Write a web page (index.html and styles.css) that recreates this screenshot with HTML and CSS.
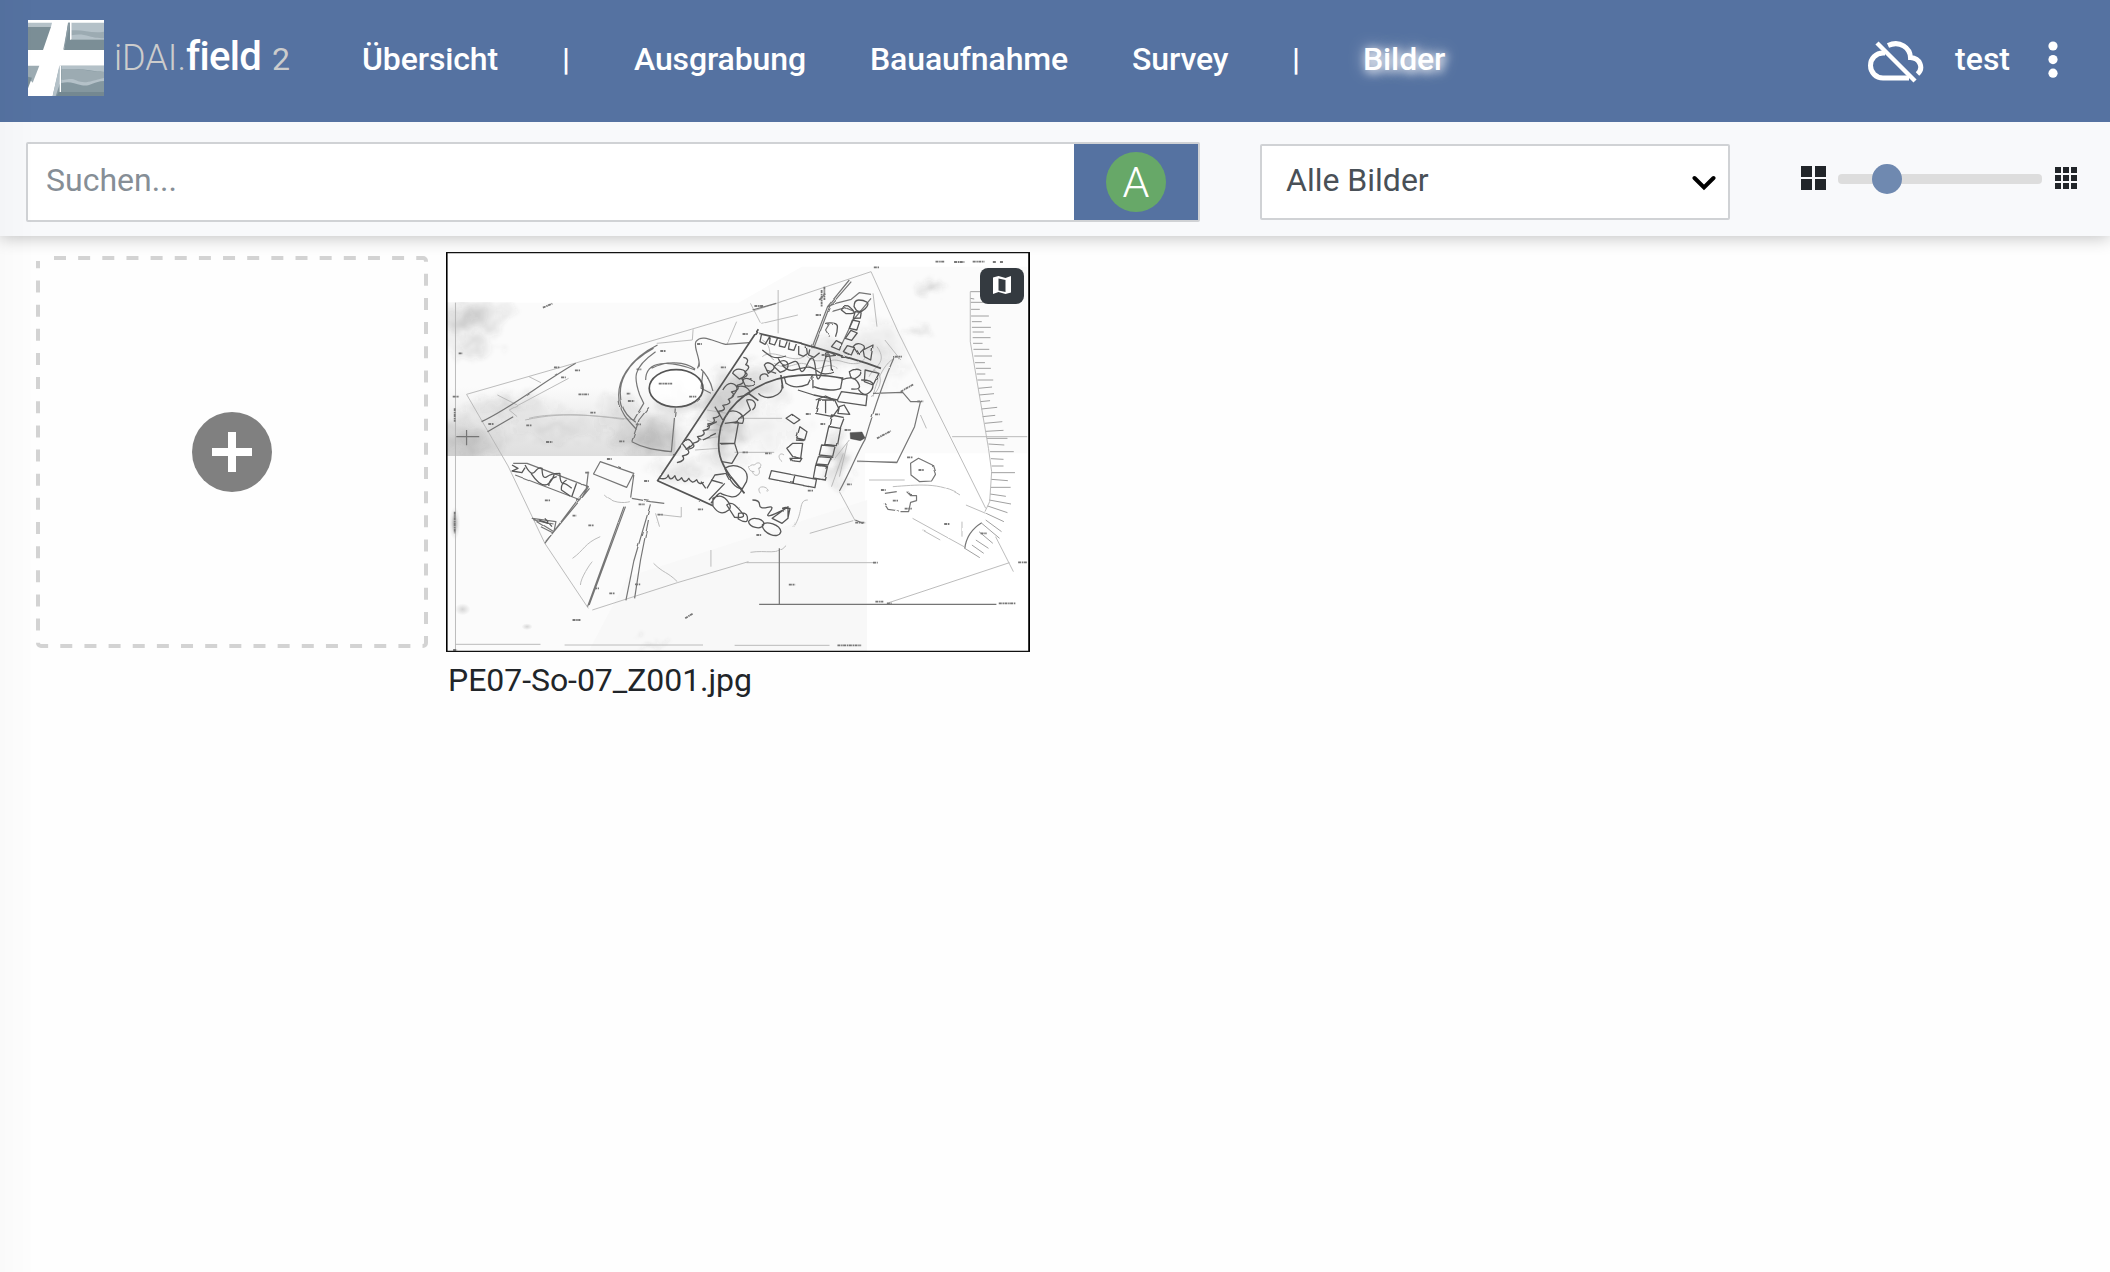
FILE: index.html
```html
<!DOCTYPE html>
<html lang="de">
<head>
<meta charset="utf-8">
<title>iDAI.field 2</title>
<link rel="stylesheet" href="styles.css">
</head>
<body>
<header class="navbar">
  <svg class="logo" viewBox="84 60 228 228" aria-hidden="true">
    <path fill="#fff" d="M84 60h228v228H84z"/>
    <path fill="#b4c1c8" d="M84 68h72l-3 12H84z"/>
    <path fill="#7b8e96" d="M84 80h69l-24 70H84z"/>
    <path fill="#7b8e96" d="M204 68l-12 82h120v-32h-98V68z"/>
    <path fill="#8b9ca4" d="M205 68h7l-20 82-2-2z"/>
    <path fill="#b4c1c8" d="M215 68h97v50h-97z"/>
    <path fill="#9cabb2" d="M215 91c34-3 60 10 97 4v20c-20 0-30-2-44-6-18-5-32-7-53-3z"/>
    <path stroke="#fff" stroke-width="4" d="M212 66v53"/>
    <path fill="#9cabb2" d="M84 197h34l-20 51-14-16z"/>
    <path fill="#7b8e96" d="M84 230l12 3-12 32z"/>
    <path fill="#84979f" d="M179 197h133v91H158z"/>
    <path fill="#b4c1c8" d="M184 197h128v19c-34 0-47-11-128-7z"/>
    <path fill="#9cabb2" d="M184 208c70-4 82 9 128 7v27c-35 0-33 11-63 7-29-4-39-12-65-9z"/>
    <path fill="#b4c1c8" d="M184 239c17 2 29-6 44 2 30 13 44 1 84-7v9c-35 2-39 17-67 13-24-7-38-13-61-7z"/>
    <path fill="#748891" d="M176 276h136v12H170z"/>
    <path fill="#b4c1c8" d="M178 197l-20 91h9l13-38z"/>
    <path stroke="#fff" stroke-width="4" d="M181 197v79"/>
  </svg>
  <div class="brand"><span class="brand-light">iDAI.</span><span class="brand-name">field</span><span class="brand-version">2</span></div>
  <nav class="nav">
    <a class="n-over">Übersicht</a><span class="sep">|</span><a class="n-dig">Ausgrabung</a><a class="n-build">Bauaufnahme</a><a class="n-survey">Survey</a><span class="sep">|</span><a class="active">Bilder</a>
  </nav>
  <div class="status">
    <svg class="cloud" viewBox="0 0 56 44" fill="none" stroke="#fff" stroke-width="5">
      <path d="M17 13h-2C8 13 2.500 18.500 2.500 25.500S8 38 15 38h26M20 5.500C32 0 42 8 42.500 17.500C52 18 56 28 49.500 34"/>
      <path stroke-width="4.500" d="M9 3l38 38"/>
    </svg>
    <span class="project">test</span>
    <svg class="dots" viewBox="0 0 10 38" fill="#fff"><circle cx="5" cy="5" r="4.600"/><circle cx="5" cy="18.600" r="4.600"/><circle cx="5" cy="32.200" r="4.600"/></svg>
  </div>
</header>
<section class="toolbar">
  <div class="search"><span class="placeholder">Suchen...</span><button class="type-button"><span class="type-icon">A</span></button></div>
  <div class="select"><span>Alle Bilder</span>
    <svg class="chevron" viewBox="0 0 24 16"><path d="M2.500 3l9.500 9.500L21.500 3" fill="none" stroke="#000" stroke-width="4" stroke-linecap="round"/></svg>
  </div>
  <div class="zoom">
    <svg class="grid-large" viewBox="0 0 25 24" fill="#212529"><path d="M0 0h11v11H0zM14 0h11v11H14zM0 13h11v11H0zM14 13h11v11H14z"/></svg>
    <div class="track"><i class="thumb"></i></div>
    <svg class="grid-small" viewBox="0 0 22 22" fill="#212529"><path d="M0 0h6v6H0zM8 0h6v6H8zM16 0h6v6h-6zM0 8h6v6H0zM8 8h6v6H8zM16 8h6v6h-6zM0 16h6v6H0zM8 16h6v6H8zM16 16h6v6h-6z"/></svg>
  </div>
</section>
<main class="gallery">
  <svg class="dropzone" viewBox="0 0 392 392">
    <path d="M18 2H387a3 3 0 0 1 3 3V387a3 3 0 0 1-3 3H5a3 3 0 0 1-3-3V5" fill="none" stroke="#d3d3d3" stroke-width="4" stroke-dasharray="12 12.150"/>
    <circle cx="196" cy="196" r="40" fill="#808080"/><path d="M176 196h40M196 176v40" stroke="#fff" stroke-width="8"/>
  </svg>
  <figure class="item">
    <div class="thumb-wrap">
      <svg class="plan" viewBox="40 36 1477 1200" preserveAspectRatio="none">
        <defs>
          <radialGradient id="smudge"><stop offset="0" stop-color="#444" stop-opacity=".26"/><stop offset="1" stop-color="#555" stop-opacity="0"/></radialGradient>
          <linearGradient id="band" x1="0" y1="0" x2="0" y2="1"><stop offset="0" stop-color="#777" stop-opacity="0"/><stop offset="1" stop-color="#777" stop-opacity=".22"/></linearGradient>
          <clipPath id="sheet"><path d="M40 188h900v460H40z"/></clipPath>
          <filter id="rough" filterUnits="userSpaceOnUse" x="40" y="36" width="1477" height="1200">
            <feTurbulence type="fractalNoise" baseFrequency=".03" numOctaves="1" seed="4" result="n"/>
            <feDisplacementMap in="SourceGraphic" in2="n" scale="6" xChannelSelector="R" yChannelSelector="G" result="d"/>
            <feGaussianBlur in="d" stdDeviation="1"/>
          </filter>
          <filter id="cloudy" filterUnits="userSpaceOnUse" x="40" y="36" width="1477" height="1200">
            <feTurbulence type="fractalNoise" baseFrequency=".022" numOctaves="3" seed="9" result="n"/>
            <feDisplacementMap in="SourceGraphic" in2="n" scale="80" xChannelSelector="R" yChannelSelector="G" result="d"/>
            <feGaussianBlur in="d" stdDeviation="4"/>
          </filter>
        </defs>
        <path fill="#fff" d="M40 36h1477v1200H40z"/>
        <path fill="#fbfbfb" d="M40 188h740L940 80h570v560H1100v596H40z"/>
        <path fill="#f8f8f8" d="M500 1010L1105 780v456H400z"/>
        <g clip-path="url(#sheet)">
          <path fill="url(#band)" d="M40 440h580v208H40z"/>
          <g fill="url(#smudge)" filter="url(#cloudy)">
            <ellipse cx="100" cy="230" rx="120" ry="70"/><ellipse cx="100" cy="320" rx="90" ry="45" opacity=".6"/>
            <ellipse cx="90" cy="600" rx="120" ry="80"/><ellipse cx="560" cy="590" rx="120" ry="80"/>
            <ellipse cx="200" cy="500" rx="140" ry="50" opacity=".6"/><ellipse cx="640" cy="490" rx="80" ry="50"/>
            <ellipse cx="480" cy="520" rx="60" ry="80" opacity=".5"/><ellipse cx="320" cy="560" rx="160" ry="50" opacity=".4"/>
          </g>
        </g>
        <g fill="url(#smudge)" filter="url(#cloudy)">
          <ellipse cx="740" cy="540" rx="75" ry="170"/><ellipse cx="730" cy="560" rx="50" ry="130" opacity=".6"/><ellipse cx="810" cy="440" rx="110" ry="80"/>
          <ellipse cx="840" cy="570" rx="130" ry="80" opacity=".3"/><ellipse cx="1265" cy="140" rx="45" ry="30" opacity=".8"/>
          <ellipse cx="1230" cy="272" rx="35" ry="20" opacity=".6"/><ellipse cx="1130" cy="340" rx="80" ry="120" opacity=".5"/>
          <ellipse cx="1030" cy="650" rx="36" ry="120"/><ellipse cx="1020" cy="340" rx="120" ry="60" opacity=".6"/>
          <ellipse cx="640" cy="690" rx="110" ry="50" opacity=".5"/><ellipse cx="560" cy="1205" rx="40" ry="18" opacity=".5"/>
        </g>
        <g fill="url(#smudge)">
          <ellipse cx="62" cy="850" rx="14" ry="50"/><ellipse cx="62" cy="850" rx="9" ry="30"/>
          <ellipse cx="82" cy="1108" rx="20" ry="18" opacity=".8"/><ellipse cx="245" cy="1160" rx="14" ry="10" opacity=".8"/>
        </g>
        <ellipse cx="622" cy="445" rx="66" ry="54" fill="#fff" opacity=".85"/>
        <g class="faint">
          <path d="M92 463L365 370 660 268 820 212 1115 95 1185 280 1405 805M1430 890l45 105"/>
          <path d="M92 463l105 215 93 232 110 195M410 1110L625 1028 805 965M960 880l110-38M1465 968L1160 1088M1035 755l40 88"/>
          <path d="M880 150v130M810 190l25 58M1320 590h190M800 968h325M64 188v1040M64 1213h215M340 1215h350M770 1216h240"/>
        </g>
        <g class="faint" filter="url(#rough)">
          <path d="M250 535c60-20 180-8 270 5M240 540c110-30 200-8 250-2M780 535h110M770 637h100"/>
          <path d="M775 245l-25 70M350 415l-150 95M200 510l20 20M250 410l30 18M170 465l50 30M665 268l-2 32-90 10"/>
          <path d="M430 890c-40 20-40 40-70 65M380 1035c0-20 25-65 30-70M440 765c20 25 50 25 65 20M565 970c25 30 35 25 60 55M810 937c40-8 70 10 90-20M710 930v50M920 860c25-45 10-80 35-80"/>
          <path d="M1340 765c-50-40-110-30-170-25M1220 835l130 85M1345 890v-45M1245 870l45 30M1240 525l15 40M1185 350c-40 10-60 90-65 120"/>
          <path d="M570 820l10 40M575 823l60 8v-30M1110 720h90M1080 665h100M820 695c-20 0-15-25 0-20 10-15 25 0 10 10 10 20-10 30-15 10M835 760c-15-25 20-25 20-5M890 665c-15-15-5-30 5-20"/>
          <path d="M1130 320c30 50-10 60-20 90M1150 300l40 60M1120 390c30 10 20 60-5 80M1055 610l-20 100M1045 640l-30 100M1060 600l-40 60M840 250l90-25M1120 160l10 100"/>
          <path d="M840 300c30 20 10 50 30 60M840 350c30-30 80 30 110-5 20 30 40 10 60 20 20-20 60 30 90-10M870 370c40 30 60-20 90 10 30 20 40-20 70 5M700 540l40 20M695 570h45M680 600l50-10M670 630l60-5M700 510l50 10"/>
        </g>
        <g class="line" filter="url(#rough)">
          <path d="M130 545C210 500 280 430 368 370M145 575l65-45M575 315c-70 40-110 110-95 180 5 30 25 50 42 74M565 325c-70 45-95 105-80 170 5 20 20 40 35 52M570 335c-60 50-55 80-40 130l10 25-25 50M545 420c0-60 60-60 125-30M560 385c40-25 85-20 110 2M510 605l18-65 25-38M510 605c30 20 60 25 100 30l10-130M680 380c5-20-15-60-8-75 15-25 45 0 75 8l60-5M676 385c10-20-2-40-5-65M685 388c10 10 25 35 30 65M690 395l-5 50 25 15"/>
          <path d="M965 325l40-125 55-80M970 325l40-125 55-75M1040 315l30-75 45-65M1005 200l20-10 40-12 20-20 30 5M1015 215l35-12 20 10M1010 250l-10 20 10 20"/>
          <path d="M430 665l85 35-18 42-84-40zM400 695l-5 50L290 910M403 745L292 905M490 800L398 1100M494 800L402 1095M510 775l47 10 35 5M557 793l-42 170-20 118M552 840l-20 120-15 115M258 835l60 10-5 30zM262 840l50 12M280 860l30 18M515 705l-8 68M210 670h35l155 70-20 40L215 705"/>
          <path d="M1120 460l75-3 20 28h25L1225 560 1180 668l-100-5M1215 670l20-15 35 20 8 28-10 20-30 2-22-20zM1205 755l10 12 15 0v15l-15 5-5 28-18 0M1150 760l30-5M1148 790l10 18 30 5M1175 348c-25 65-45 130-75 250-20 40-35 90-65 155M1395 848c-25 18-40 45-43 78"/>
          <path d="M92 570v46M66 590h58M815 210l60-20M1075 840l20 10"/>
        </g>
        <path class="line" d="M883 925v170M832 1093h600"/>
        <g class="dark" filter="url(#rough)">
          <path d="M830 268L575 722l140 75M830 280l110 30 165 60 35 15M905 410c-80 15-150 80-170 150-14 75 0 110 25 150l35 50"/>
          <path d="M905 410c50-10 90-5 140 5M805 460l25 22M887 405l5 40"/>
          <ellipse cx="622" cy="445" rx="68" ry="56"/>
        </g>
        <g class="stone" filter="url(#rough)">
          <path d="M838 283l-4 22 13 8 12-24M860 292l-2 18 13 5 8-22M885 300l-2 18 14 4 6-18M909 307l-3 20 14 4 6-19M932 318l0 25 12 6 10-8-3-22M960 328l-3 17 14 7 14-14M1000 340c10-8 20 2 25 6l-25 4z"/>
          <path d="M1015 320l12-18 14 8-6 20zM1045 335l10-18 18 6-8 22zM1070 320c10-18 30-5 28 5l-15 18zM1095 330l25-15-6 45-16-10zM1050 295l14-24 16 8-14 22zM1060 265l8-25 18 5-7 25zM1070 235l5-20 15 3-2 16zM1072 200q0-20 12-20t20 6-4 20-22 5zM1040 210q10-20 20-10t12 16-20 5z"/>
          <path d="M1060 395q15-12 25-4t-4 20-18-3zM1040 420q20-10 30-5t15 20-20 12M1100 390l35 10-15 35-22-10zM1090 420q30 0 30 15t-12 25-25-12M840 330c20 20 30 30 60 18M880 355q10 25 20 20t20-10 15 20 20-15 20 20 20-15 20 18M890 375q15 20 30 15t30-8 30 12 40 2"/>
          <path d="M845 375q5-10 15-5t10 12-15 18zM765 400q5-15 20-12t12 14-15 15zM790 420q10-10 22 0t5 15-20 2zM870 380q15-20 25-18t10 15-20 20zM835 420c-5-18 15-25 20-10M740 450q10-20 20-20t15 10-12 30M775 440q20-5 30 8t-8 18-20 5"/>
          <path d="M890 435c5 35-45 50-60 25M895 410l5 20c20 18 45 8 55 3l12-28M968 410v35M970 440c30 15 60 10 68 5l5-32M930 450l40 15 60 15M1030 480l10-25 65 10-3 32-70-12z"/>
          <path d="M975 520l8-40 40 0 10 25-15 25zM1000 480v40M1035 500l12-5 14 28-30-3zM975 480l25-12 25 14M1015 525l32 8-10 32-28-6zM1008 560l30 5-8 52-32-4zM990 615l34 4-6 30-34-4zM982 650l32 3-8 22-30-3zM975 675l30 5-8 40-28-6z"/>
          <path d="M863 692l114 26-4 25-116-27zM922 706l-4 24M900 535l15-12 20 16-15 12zM935 560l18 15-6 25-20-6zM902 625l15-15 25 0-5 45-20-5zM925 600l20 2M910 655h30l-5 10-22-3z"/>
          <path d="M755 515c20-8 45 10 35 35l-25-2M745 550l35-5-10 65-38 0M735 612l35-2 8 30-15 30-25-5M745 685c25-20 65 0 55 40l-10 20c-20 5-35-30-45-60M790 745q-10 30-30 25t-25-10-25 30M715 775q20-15 35 5t5 30-20 8-20-20zM750 795q10-10 20 0t20 25-20 12zM780 820q20-5 22 10t-5 15-18-8z"/>
          <path d="M805 845c10-20 45-5 38 10s-35 8-38-10zM840 855c10-15 45 0 47 20-5 25-48 5-47-20zM865 835l40-35 0 35-15 15zM815 780q18 0 18 14t20 8 5 15 22 0 10-12M890 805h20l-5 28"/>
          <path d="M792 352q18 4 6 22q16 6-2 22q14 10-8 20q12 14-12 20q10 14-14 20q14 12-8 22q12 14-14 18q12 16-12 18q12 16-12 20q10 14-14 18q12 14-12 20q10 14-14 18q12 14-12 20q10 14-14 18q12 14-12 20q10 14-14 20M580 715q20 5 22-10 5 22 17 2 5 25 17 6 8 22 18 2 8 20 20 4 6 18 18 8M700 745l20-40 30-5M710 720l30 10"/>
          <path d="M240 675q15 35 25 20t18-10q0 35 12 25t33-10q0 30 8 30t22 15M255 700q20 35 35 35t25-35M320 710q-20 5-20 28M345 720q-15 10-13 30l22 18M370 730l-12 40M207 675l15 10-15 8 25 5 8-15M290 835l18 25M275 840l25 10"/>
          <path d="M770 550l40-40-10-30M720 500l20 40M700 560l25-15M690 600l35-20M800 480c20-5 30 15 15 30M1000 250q30-5 30 10t-5 30M850 390l25 10M745 730l-40 50M685 725l12 20M640 610q10-18 18-8t5 13-12 12z"/>
        </g>
        <path d="M1062 578l30-2 8 18-12 8-25-6z" fill="#555" stroke="#333"/>
        <path class="hachure" d="M1366 155h28M1366 175l10 2M1367 187h45M1368 208h22M1368 228h45M1370 245h25M1370 262h48M1372 276h28M1372 293h45M1373 310h24M1374 328h40M1376 348h45M1378 368h25M1380 385h38M1382 402h22M1384 420h40M1386 445l35-4M1388 465l38-4M1391 485l25-3M1394 507l40-5M1397 530l32-4M1402 550l45-5M1405 574l45-3M1408 595h52M1412 612l40 3M1416 635h60M1418 656l32 2M1420 678h30M1419 698h60M1419 718l42 4M1418 742h50M1416 762l40 7M1414 780l55 12M1410 798l50 20M1406 820l45 25M1405 840l40 35M1395 850l45 45M1388 875l35 35M1380 900l32 25M1370 915l30 25M1352 925l38 28"/>
        <path class="faint" d="M1366 155v150l20 140 26 180 8 70-5 90-12 30M1405 820l-50-25"/>
        <path class="marks" d="M57 470h16M375 463h26M313 382h15M331 412h12M366 391h13M405 518h14M243 556h14M147 552h14M293 606h16M478 604h14M582 333h14M522 388h12M497 461h10M500 483h16M520 553h14M578 431h34M655 470h18M675 312h12M735 382h13M790 282h14M820 198h22M975 225h14M1122 82h14M987 552h12M950 522h12M790 637h14M847 640h16M1125 523h12M1048 570h16M1190 455l32-22M1130 595l35-22M1175 350h18M1232 484h15M1235 690h14M1170 782h14M1140 750h12M1200 806h18M1206 652h15M1054 733h12M1075 848h25M1300 852h14M1392 880h16M1487 967h22M1120 968h12M1126 1085h20M1438 1090h42M907 1034h16M360 1140h20M453 1060h14M415 1045h12M400 856h14M290 781h14M447 657h12M541 723h12M392 698h10M527 793h16M575 824h14M677 808h14M825 885h12M955 752h14M518 1033h14M360 827h10M990 345h20M1030 1216h60M1278 65h22M1325 66h26M1372 65h30M1423 66h8M1441 66h8M72 340h10M285 203l24-12M1155 1090h12M984 180l16-20M990 150v50M997 140v40M62 505v40M645 1135l20-15M62 815v65M58 1230h10"/>
        <path d="M41.500 36v1200M1515 36v1200" stroke="#000" stroke-width="5"/>
        <path d="M40 38h1477M40 1234.500h1477" stroke="#111" stroke-width="4"/>
      </svg>
      <span class="badge"><svg viewBox="0 0 20 18"><path fill="#fff" fill-rule="evenodd" d="M1 1.500L6.500 0l7 2L19 0v16.500L13.500 18l-7-2L1 18zM6.500 2.500v12l7 1.500V4z"/></svg></span>
    </div>
    <figcaption>PE07-So-07_Z001.jpg</figcaption>
  </figure>
</main>
</body>
</html>
```
FILE: styles.css
```css
* { box-sizing: border-box; }
body {
  margin: 0;
  min-height: 1272px;
  font-family: Roboto, sans-serif;
  font-size: 32px;
  line-height: 48px;
  color: #212529;
  background: #fefefe;
}
body::before {
  content: "";
  position: fixed;
  z-index: 5;
  inset: 0 auto 0 0;
  width: 36px;
  background: linear-gradient(to right, rgba(0,0,0,.015), transparent);
}
svg { display: block; flex: none; }
.navbar {
  position: relative;
  z-index: 2;
  display: flex;
  height: 122px;
  padding: 20px 52px 0 28px;
  background: #5572a1;
  color: #fff;
}
.logo { width: 76px; height: 76px; }
.brand { display: flex; align-items: baseline; width: 258px; padding: 10px 0 0 10px; line-height: 54px; white-space: nowrap; }
.brand-light { font-size: 36px; font-weight: 300; color: #ccc; }
.brand-name { font-size: 40px; font-weight: 500; letter-spacing: -.7px; }
.brand-version { margin-left: 11px; color: #ccc; }
.nav { display: flex; padding-top: 15px; font-weight: 500; letter-spacing: -.12px; white-space: nowrap; }
.nav a { display: block; }
.n-over { width: 200px; }
.sep { width: 72px; }
.n-dig { width: 236px; }
.n-build { width: 262px; }
.n-survey { width: 160px; }
.active { margin-left: -1px; text-shadow: 2px 2px 10px #fff, 0 0 16px rgba(255,255,255,.7); }
.status { display: flex; margin-left: auto; }
.cloud { width: 56px; height: 44px; margin: 20px 31px 0 0; }
.project { padding-top: 15px; font-weight: 500; }
.dots { width: 10px; height: 38px; margin: 21px 0 0 38px; }
.toolbar {
  display: flex;
  height: 114px;
  padding: 20px 33px 0 26px;
  background: #f8f9fb;
  box-shadow: 0 2px 16px rgba(0,0,0,.24);
}
.search { display: flex; justify-content: space-between; width: 1174px; height: 80px; border: 2px solid #d0d2d5; border-radius: 2px; background: #fff; }
.placeholder { padding: 12px 0 0 18px; color: #868e96; }
.type-button { display: grid; place-items: center; width: 124px; padding: 0; border: 0; background: #5572a1; }
.type-icon { width: 60px; height: 60px; border-radius: 50%; background: #67a868; color: #fff; font: 300 43px/60px Roboto, sans-serif; text-align: center; }
.select { display: flex; justify-content: space-between; width: 470px; height: 76px; margin: 2px 0 0 60px; padding: 10px 12px 0 24px; border: 2px solid #d0d2d5; border-radius: 2px; background: #fff; color: #495057; }
.chevron { width: 24px; height: 16px; margin-top: 19px; }
.zoom { display: flex; margin-left: auto; }
.grid-large { width: 25px; height: 24px; margin: 24px 12px 0 0; }
.track { width: 204px; height: 10px; margin-top: 32px; padding-left: 34px; border-radius: 4px; background: #ddd; }
.thumb { display: block; width: 30px; height: 30px; margin-top: -10px; border-radius: 50%; background: #6f89b0; }
.grid-small { width: 22px; height: 22px; margin: 25px 0 0 13px; }
.gallery { display: flex; align-items: flex-start; padding: 16px 36px; }
.dropzone { width: 392px; height: 392px; margin-top: 4px; }
.item { margin: 0 0 0 18px; }
.thumb-wrap { position: relative; width: 584px; height: 400px; }
.plan { width: 584px; height: 400px; overflow: hidden; }
.plan .faint, .plan .line, .plan .dark, .plan .stone, .plan .hachure, .plan .marks { fill: none; stroke-linejoin: round; }
.plan .faint *, .plan .faint, .plan .line *, .plan .line, .plan .dark *, .plan .stone *, .plan .hachure, .plan .marks { vector-effect: non-scaling-stroke; }
.plan .faint { stroke: #b4b4b4; stroke-width: .9px; }
.plan .line { stroke: #757575; stroke-width: 1.2px; }
.plan .dark { stroke: #555; stroke-width: 1.7px; }
.plan .stone { stroke: #585858; stroke-width: 1.3px; }
.plan .hachure { stroke: #a0a0a0; stroke-width: 1px; }
.plan .marks { stroke: #777; stroke-width: 1.8px; stroke-dasharray: 3 .7 1.500 .5; }
.badge { position: absolute; top: 16px; right: 6px; display: grid; place-items: start center; width: 44px; height: 36px; padding-top: 8px; border-radius: 8px; background: #343a40; }
.badge svg { width: 20px; height: 18px; }
figcaption { padding: 4px 0 0 2px; letter-spacing: -.05px; }
```
